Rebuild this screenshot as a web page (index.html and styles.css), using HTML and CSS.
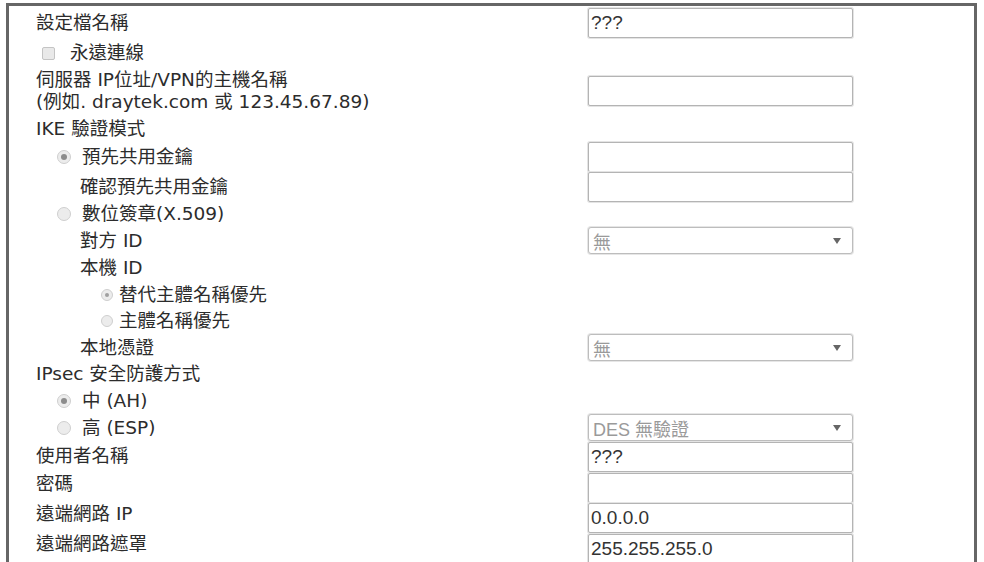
FILE: index.html
```html
<!DOCTYPE html>
<html lang="zh-Hant">
<head>
<meta charset="utf-8">
<title>VPN 設定檔</title>
<link rel="stylesheet" href="styles.css">
</head>
<body>
<div class="frame">
  <div class="row h34">
    <div class="label">設定檔名稱</div>
    <input class="field" type="text" value="???">
  </div>
  <div class="row">
    <label class="label check"><input type="checkbox" class="cb">永遠連線</label>
  </div>
  <div class="row h50">
    <div class="label two">伺服器 IP位址/VPN的主機名稱<br>(例如. draytek.com 或 123.45.67.89)</div>
    <input class="field" type="text" value="">
  </div>
  <div class="row">
    <div class="label">IKE 驗證模式</div>
  </div>
  <div class="row h30">
    <label class="label opt"><input type="radio" name="ike" class="rd" checked>預先共用金鑰</label>
    <input class="field" type="text" value="">
  </div>
  <div class="row h29">
    <div class="label ind1">確認預先共用金鑰</div>
    <input class="field" type="text" value="">
  </div>
  <div class="row">
    <label class="label opt"><input type="radio" name="ike" class="rd">數位簽章(X.509)</label>
  </div>
  <div class="row h27">
    <div class="label ind1">對方 ID</div>
    <div class="select"><span class="sel-text">無</span><span class="arrow"></span></div>
  </div>
  <div class="row h27">
    <div class="label ind1">本機 ID</div>
  </div>
  <div class="row h27">
    <label class="label opt2"><input type="radio" name="lid" class="rd sm" checked>替代主體名稱優先</label>
  </div>
  <div class="row">
    <label class="label opt2"><input type="radio" name="lid" class="rd sm">主體名稱優先</label>
  </div>
  <div class="row">
    <div class="label ind1">本地憑證</div>
    <div class="select"><span class="sel-text">無</span><span class="arrow"></span></div>
  </div>
  <div class="row h28">
    <div class="label">IPsec 安全防護方式</div>
  </div>
  <div class="row">
    <label class="label opt"><input type="radio" name="sec" class="rd" checked>中 (AH)</label>
  </div>
  <div class="row h27">
    <label class="label opt"><input type="radio" name="sec" class="rd">高 (ESP)</label>
    <div class="select"><span class="sel-text">DES 無驗證</span><span class="arrow"></span></div>
  </div>
  <div class="row h32">
    <div class="label lift1">使用者名稱</div>
    <input class="field" type="text" value="???">
  </div>
  <div class="row h30">
    <div class="label lift2">密碼</div>
    <input class="field" type="password" value="">
  </div>
  <div class="row h30">
    <div class="label lift2">遠端網路 IP</div>
    <input class="field" type="text" value="0.0.0.0">
  </div>
  <div class="row h30">
    <div class="label lift3">遠端網路遮罩</div>
    <input class="field" type="text" value="255.255.255.0">
  </div>
</div>
</body>
</html>
```

FILE: styles.css
```css
html, body {
  margin: 0;
  padding: 0;
  background: #ffffff;
  overflow: hidden;
}

body {
  font-family: "DejaVu Sans", "Noto Sans CJK TC", sans-serif;
  color: #2c2c2c;
}

.frame {
  margin: 3px 0 0 6px;
  width: 965px;
  height: 556px;
  overflow: hidden;
  border: 3px solid #666666;
  border-bottom: none;
  background: #ffffff;
}

.row {
  display: grid;
  grid-template-columns: 579px 265px;
  align-items: center;
  height: 26px;
}

.h27 { height: 27px; }
.h28 { height: 28px; }
.h29 { height: 29px; }
.h30 { height: 30px; }
.h32 { height: 32px; }
.h34 { height: 34px; }
.h50 { height: 50px; }

.label {
  padding-left: 27px;
  font-size: 18.5px;
  line-height: 22px;
  white-space: nowrap;
  color: #2c2c2c;
  display: flex;
  align-items: center;
}

.label.two {
  display: block;
}

.ind1 { padding-left: 71px; }

.lift1 { margin-bottom: 2px; }
.lift2 { margin-bottom: 8px; }
.lift3 { margin-bottom: 10px; }

.check { padding-left: 33px; }
.opt { padding-left: 48px; }
.opt2 { padding-left: 92px; }

.cb {
  -webkit-appearance: none;
  appearance: none;
  margin: 0 15px 0 0;
  width: 13px;
  height: 13px;
  border: 1px solid #c4c4c4;
  border-radius: 2px;
  background: #e9e9e9;
  box-sizing: border-box;
}

.rd {
  -webkit-appearance: none;
  appearance: none;
  margin: 0 11px 0 0;
  width: 14px;
  height: 14px;
  border: 1px solid #cfcfcf;
  border-radius: 50%;
  background: #ececec;
  box-sizing: border-box;
  display: grid;
  place-content: center;
}

.rd:checked::before {
  content: "";
  width: 6px;
  height: 6px;
  border-radius: 50%;
  background: #8c8c8c;
}

.rd.sm {
  width: 12px;
  height: 12px;
  margin-right: 6px;
}

.rd.sm:checked::before {
  width: 4px;
  height: 4px;
  background: #a0a0a0;
}

.field {
  box-sizing: border-box;
  width: 265px;
  height: 30px;
  margin: 0;
  padding: 0 2px;
  border: 1px solid #b4b4b4;
  border-radius: 2px;
  box-shadow: 0 0 0 1px #e4e4e4;
  background: #ffffff;
  font-family: "Liberation Sans", "Noto Sans CJK TC", sans-serif;
  font-size: 19px;
  color: #333333;
  outline: none;
}

.select {
  box-sizing: border-box;
  width: 265px;
  height: 27px;
  border: 1px solid #bdbdbd;
  border-radius: 3px;
  box-shadow: 0 0 0 1px #e6e6e6;
  background: #ffffff;
  display: flex;
  align-items: center;
  justify-content: space-between;
  padding: 0 11px 0 4px;
}

.sel-text {
  font-family: "Liberation Sans", "Noto Sans CJK TC", sans-serif;
  font-size: 18px;
  color: #9a9a9a;
  white-space: nowrap;
}

.arrow {
  width: 0;
  height: 0;
  border-left: 4px solid transparent;
  border-right: 4px solid transparent;
  border-top: 6px solid #666666;
}
```
